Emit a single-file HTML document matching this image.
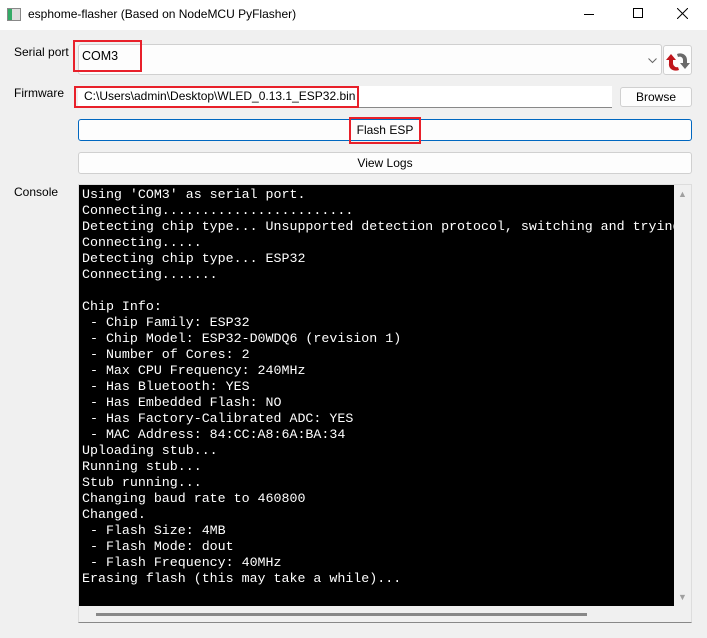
<!DOCTYPE html>
<html><head><style>
body{margin:0;width:707px;height:638px;background:#f0f0f0;font-family:"Liberation Sans",sans-serif;font-size:12px;position:relative;overflow:hidden;color:#000}
div{position:absolute;box-sizing:border-box}
.lbl{left:14px;font-size:12px}
.btn{background:#fdfdfd;border:1px solid #d0d0d0;border-radius:3px;text-align:center}
.red{border:2px solid #e8202a}
pre{margin:0;font-family:"Liberation Mono",monospace;font-size:13.3px;line-height:16px;color:#fff}
</style></head><body>
<div style="left:0;top:0;width:707px;height:30px;background:#fff"></div>
<div style="left:7px;top:8px;width:14px;height:13px;border:1px solid #888;background:linear-gradient(90deg,#3a6 0 4px,#ddd 4px)"></div>
<div style="left:28px;top:7px;font-size:12px">esphome-flasher (Based on NodeMCU PyFlasher)</div>
<div style="left:584px;top:14px;width:10px;height:1px;background:#000"></div>
<div style="left:633px;top:8px;width:10px;height:10px;border:1px solid #000"></div>
<svg style="position:absolute;left:677px;top:8px" width="11" height="11"><path d="M0 0L11 11M11 0L0 11" stroke="#000" stroke-width="1"/></svg>

<div class="lbl" style="top:45px">Serial port</div>
<div style="left:78px;top:44px;width:584px;height:31px;background:#fdfdfd;border:1px solid #d0d0d0;border-radius:3px"></div>
<div style="left:82px;top:49px;font-size:12.5px">COM3</div>
<svg style="position:absolute;left:648px;top:58px" width="9" height="6"><path d="M0.5 0.5L4.5 4.5L8.5 0.5" stroke="#666" fill="none"/></svg>
<div class="red" style="left:73px;top:40px;width:69px;height:32px"></div>
<div class="btn" style="left:663px;top:45px;width:29px;height:30px"></div>
<svg style="position:absolute;left:665px;top:48px" width="26" height="26" viewBox="0 0 26 26">
<path d="M12 6C17 4 22 7 22 12L22 15L25 15L20 21L15 15L18 15L18 12C18 9 15 8 13 9Z" fill="#6a6a6a"/>
<path d="M14 22C9 24 3 21 4 15L4 12L1 12L6 6L11 12L8 12L8 15C8 18 11 20 13 19Z" fill="#c0151b"/>
</svg>

<div class="lbl" style="top:86px">Firmware</div>
<div style="left:78px;top:86px;width:534px;height:22px;background:#fff;border-bottom:1px solid #888"></div>
<div style="left:84px;top:89px;font-size:12px">C:\Users\admin\Desktop\WLED_0.13.1_ESP32.bin</div>
<div class="red" style="left:74px;top:86px;width:285px;height:22px"></div>
<div class="btn" style="left:620px;top:87px;width:72px;height:20px;line-height:18px">Browse</div>

<div class="btn" style="left:78px;top:119px;width:614px;height:22px;border-color:#0067c0;line-height:20px">Flash ESP</div>
<div class="red" style="left:349px;top:117px;width:72px;height:27px"></div>
<div class="btn" style="left:78px;top:152px;width:614px;height:22px;line-height:20px">View Logs</div>

<div class="lbl" style="top:185px">Console</div>
<div style="left:78px;top:184px;width:614px;height:439px;background:#f0f0f0;border:1px solid #ddd;border-bottom-color:#888"></div>
<div style="left:79px;top:185px;width:595px;height:421px;background:#000;overflow:hidden;padding:2px 0 0 3px"><pre>Using 'COM3' as serial port.
Connecting........................
Detecting chip type... Unsupported detection protocol, switching and trying
Connecting.....
Detecting chip type... ESP32
Connecting.......

Chip Info:
 - Chip Family: ESP32
 - Chip Model: ESP32-D0WDQ6 (revision 1)
 - Number of Cores: 2
 - Max CPU Frequency: 240MHz
 - Has Bluetooth: YES
 - Has Embedded Flash: NO
 - Has Factory-Calibrated ADC: YES
 - MAC Address: 84:CC:A8:6A:BA:34
Uploading stub...
Running stub...
Stub running...
Changing baud rate to 460800
Changed.
 - Flash Size: 4MB
 - Flash Mode: dout
 - Flash Frequency: 40MHz
Erasing flash (this may take a while)...</pre></div>
<div style="left:678px;top:189px;font-size:9px;color:#a0a0a0">▲</div>
<div style="left:678px;top:592px;font-size:9px;color:#a0a0a0">▼</div>
<div style="left:96px;top:613px;width:491px;height:3px;background:#888"></div>
</body></html>
